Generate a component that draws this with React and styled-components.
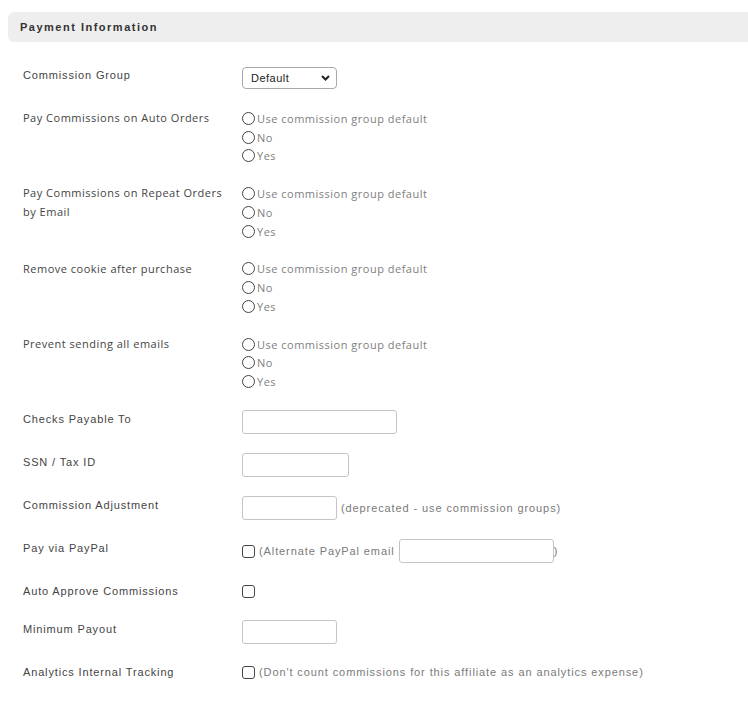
import React from 'react';
import styled, { createGlobalStyle } from 'styled-components';

const GlobalStyle = createGlobalStyle`
  body {
    margin: 0;
    background: #fff;
    font-family: 'Liberation Sans', Arial, sans-serif;
  }
`;

const Page = styled.div`
  padding: 12px 0 0 8px;
`;

const SectionHeader = styled.div`
  height: 30px;
  background: #eeeeee;
  border-radius: 6px 0 0 6px;
  display: flex;
  align-items: center;
  padding-left: 12px;
  font-size: 11px;
  font-weight: 700;
  letter-spacing: 1.5px;
  color: #333;
`;

const Form = styled.div`
  padding: 24px 0 0 15px;
`;

const Row = styled.div`
  display: flex;
  align-items: flex-start;
  margin-bottom: 19px;
`;

const Label = styled.div`
  width: 219px;
  flex-shrink: 0;
  line-height: 18.75px;
  color: #444;
  font-family: ${(p) =>
    p.$soft ? "'Open Sans', 'Noto Sans', sans-serif" : "'Liberation Sans', Arial, sans-serif"};
  font-size: 11px;
  letter-spacing: ${(p) => (p.$soft ? '0.5px' : '0.85px')};
`;

const Control = styled.div`
  display: flex;
  align-items: center;
  min-height: 18.75px;
`;

const RadioGroup = styled.div`
  display: flex;
  flex-direction: column;
`;

const RadioLine = styled.label`
  display: flex;
  align-items: center;
  height: 18.75px;
  font-family: 'Open Sans', 'Noto Sans', sans-serif;
  font-size: 11px;
  letter-spacing: 0.5px;
  color: #808080;
`;

const Radio = styled.input.attrs({ type: 'radio' })`
  appearance: none;
  width: 13px;
  height: 13px;
  margin: 0 2px 0 0;
  border: 1px solid #444;
  border-radius: 50%;
  box-sizing: border-box;
  background: #fff;
`;

const Checkbox = styled.input.attrs({ type: 'checkbox' })`
  appearance: none;
  width: 13px;
  height: 13px;
  margin: 0 4px 0 0;
  border: 1px solid #444;
  border-radius: 3px;
  box-sizing: border-box;
  background: #fff;
`;

const TextInput = styled.input.attrs({ type: 'text' })`
  width: ${(p) => p.$w}px;
  height: 24px;
  box-sizing: border-box;
  border: 1px solid #c4c4c4;
  border-radius: 3px;
  margin: 0;
  padding: 0 6px;
  font-size: 11px;
`;

const Select = styled.div`
  width: 95px;
  height: 22px;
  margin: 1px 0;
  box-sizing: border-box;
  border: 1px solid #a8a8a8;
  border-radius: 4px;
  display: flex;
  align-items: center;
  justify-content: space-between;
  padding: 0 6px 0 8px;
  font-size: 11px;
  letter-spacing: 0.5px;
  color: #222;
`;

const Note = styled.span`
  font-size: 11px;
  letter-spacing: 0.9px;
  color: #7a7a7a;
  margin-left: ${(p) => p.$ml || 0}px;
  margin-right: ${(p) => p.$mr || 0}px;
`;

const Chevron = () => (
  <svg width="9" height="6" viewBox="0 0 9 6">
    <path d="M1 1l3.5 3.5L8 1" fill="none" stroke="#222" strokeWidth="2" />
  </svg>
);

const RadioChoices = ({ name }) => (
  <RadioGroup>
    <RadioLine>
      <Radio name={name} />
      Use commission group default
    </RadioLine>
    <RadioLine>
      <Radio name={name} />
      No
    </RadioLine>
    <RadioLine>
      <Radio name={name} />
      Yes
    </RadioLine>
  </RadioGroup>
);

export default function App() {
  return (
    <Page>
      <GlobalStyle />
      <SectionHeader>Payment Information</SectionHeader>
      <Form>
        <Row>
          <Label>Commission Group</Label>
          <Select>
            Default
            <Chevron />
          </Select>
        </Row>
        <Row>
          <Label $soft>Pay Commissions on Auto Orders</Label>
          <RadioChoices name="auto" />
        </Row>
        <Row>
          <Label $soft>
            Pay Commissions on Repeat Orders
            <br />
            by Email
          </Label>
          <RadioChoices name="repeat" />
        </Row>
        <Row>
          <Label $soft>Remove cookie after purchase</Label>
          <RadioChoices name="cookie" />
        </Row>
        <Row>
          <Label $soft>Prevent sending all emails</Label>
          <RadioChoices name="emails" />
        </Row>
        <Row>
          <Label>Checks Payable To</Label>
          <TextInput $w={155} />
        </Row>
        <Row>
          <Label>SSN / Tax ID</Label>
          <TextInput $w={107} />
        </Row>
        <Row>
          <Label>Commission Adjustment</Label>
          <Control>
            <TextInput $w={95} />
            <Note $ml={4}>(deprecated - use commission groups)</Note>
          </Control>
        </Row>
        <Row>
          <Label>Pay via PayPal</Label>
          <Control>
            <Checkbox />
            <Note $mr={4}>(Alternate PayPal email</Note>
            <TextInput $w={155} />
            <Note>)</Note>
          </Control>
        </Row>
        <Row>
          <Label>Auto Approve Commissions</Label>
          <Control>
            <Checkbox />
          </Control>
        </Row>
        <Row>
          <Label>Minimum Payout</Label>
          <TextInput $w={95} />
        </Row>
        <Row>
          <Label>Analytics Internal Tracking</Label>
          <Control>
            <Checkbox />
            <Note>(Don't count commissions for this affiliate as an analytics expense)</Note>
          </Control>
        </Row>
      </Form>
    </Page>
  );
}
